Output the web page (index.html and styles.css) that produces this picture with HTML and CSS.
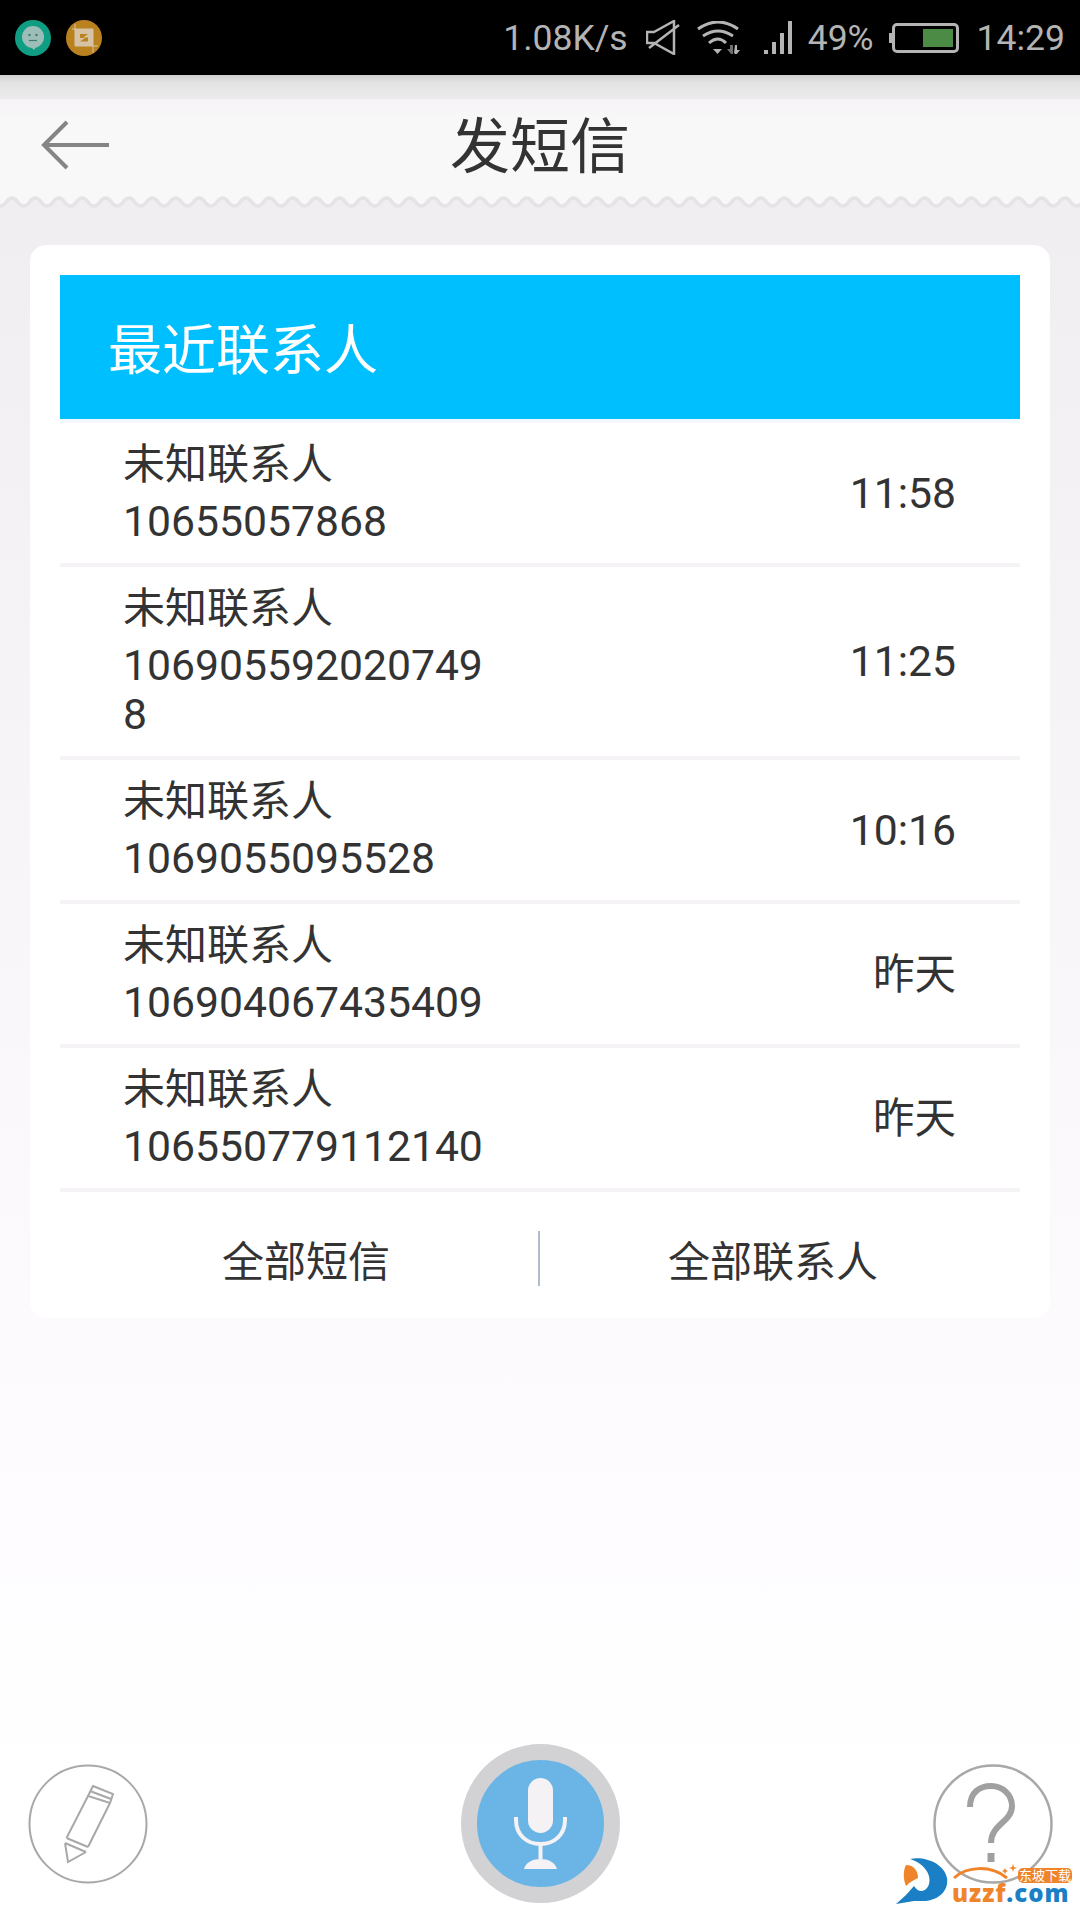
FILE: index.html
```html
<!DOCTYPE html>
<html lang="zh-CN">
<head>
    <meta charset="UTF-8">
    <meta name="viewport" content="width=device-width, initial-scale=1.0">
    <title>发短信</title>
    <link rel="stylesheet" href="styles.css">
</head>
<body>
    <div class="status-bar">
        <div class="notify-icons">
            <svg class="notify-icon" viewBox="0 0 36 36">
                <circle cx="18" cy="18" r="18" fill="#0f9e83"/>
                <circle cx="18" cy="17" r="11" fill="#9dbdb8"/>
                <path d="M15 26l4 4 3-5z" fill="#9dbdb8"/>
                <circle cx="14.500" cy="15" r="1.200" fill="#3f7a70"/>
                <circle cx="21.500" cy="15" r="1.200" fill="#3f7a70"/>
                <path d="M14 20.500h8" stroke="#3f7a70" stroke-width="1.200"/>
            </svg>
            <svg class="notify-icon" viewBox="0 0 36 36">
                <circle cx="18" cy="18" r="18" fill="#b9821f"/>
                <rect x="9" y="9" width="18" height="17" fill="#d6c3a5"/>
                <path d="M6 9h21v24M9 4v22h23" stroke="#d6c3a5" stroke-width="1" fill="none"/>
                <path d="M14 14h8l-5 3.500h5v4h-8l5-3.500h-5z" fill="#b9821f"/>
            </svg>
        </div>
        <div class="status-right">
            <span class="speed">1.08K/s</span>
            <svg class="mute-icon" viewBox="0 0 34 35" fill="none" stroke="#b4b4b4" stroke-width="2.500">
                <path d="M8 12L28 1v33L8 23H1V12h7zM3 28L33 5"/>
            </svg>
            <svg class="wifi-icon" viewBox="0 0 44 33" fill="none" stroke="#b4b4b4" stroke-width="3">
                <path d="M1 8Q21-6 41 8M6 15Q21 5 36 15M12 22Q21 14 29 22"/>
                <path d="M16 28h9l-4.500 5z" fill="#b4b4b4" stroke="none"/>
                <path d="M36 24v9h-2l-4-5h3v-4z" fill="#6e6e6e" stroke="none"/>
                <path d="M38 24h2v5h3l-4 5-2-2z" fill="#b4b4b4" stroke="none"/>
            </svg>
            <svg class="signal-icon" viewBox="0 0 28 33" fill="#b4b4b4">
                <rect x="0" y="29" width="4" height="4"/>
                <rect x="8" y="21" width="4" height="12"/>
                <rect x="16" y="12" width="4" height="21"/>
                <rect x="24" y="0" width="4" height="33"/>
            </svg>
            <span class="battery-text">49%</span>
            <div class="battery">
                <div class="battery-level"></div>
            </div>
            <span class="clock">14:29</span>
        </div>
    </div>

    <div class="title-bar">
        <svg class="back-icon" viewBox="0 0 68 50" fill="none" stroke="#858585" stroke-width="4">
            <path d="M26 2L3 25l23 23M3 25h65"/>
        </svg>
        <div class="title">发短信</div>
        <svg class="wave-edge" width="1080" height="14">
            <defs>
                <pattern id="scallop" x="0.300" width="23.400" height="14" patternUnits="userSpaceOnUse">
                    <path d="M0 11C6 11 6 3 11.700 3S17.400 11 23.400 11V0H0z" fill="#f8f8f8"/>
                    <path d="M0 11C6 11 6 3 11.700 3S17.400 11 23.400 11" fill="none" stroke="#e5e3e5" stroke-width="3.500"/>
                </pattern>
            </defs>
            <rect width="1080" height="14" fill="url(#scallop)"/>
        </svg>
    </div>

    <div class="card">
        <div class="card-header">最近联系人</div>
        <div class="contact-list">
            <div class="contact">
                <div class="contact-info">
                    <div class="contact-name">未知联系人</div>
                    <div class="contact-number">10655057868</div>
                </div>
                <div class="contact-time">11:58</div>
            </div>
            <div class="contact">
                <div class="contact-info">
                    <div class="contact-name">未知联系人</div>
                    <div class="contact-number">1069055920207498</div>
                </div>
                <div class="contact-time">11:25</div>
            </div>
            <div class="contact">
                <div class="contact-info">
                    <div class="contact-name">未知联系人</div>
                    <div class="contact-number">1069055095528</div>
                </div>
                <div class="contact-time">10:16</div>
            </div>
            <div class="contact">
                <div class="contact-info">
                    <div class="contact-name">未知联系人</div>
                    <div class="contact-number">106904067435409</div>
                </div>
                <div class="contact-time contact-day">昨天</div>
            </div>
            <div class="contact">
                <div class="contact-info">
                    <div class="contact-name">未知联系人</div>
                    <div class="contact-number">106550779112140</div>
                </div>
                <div class="contact-time contact-day">昨天</div>
            </div>
        </div>
        <div class="card-actions">
            <div class="action action-left">全部短信</div>
            <div class="action action-right">全部联系人</div>
        </div>
    </div>

    <div class="bottom-bar">
        <svg class="round-btn" viewBox="0 0 120 120" fill="none" stroke="#a8a8a8" stroke-width="2">
            <circle cx="60" cy="60" r="58.500"/>
            <path d="M65 22l20 8-3 9-22-7zM62 27l21 8M60 32L38.500 74M82 39L60 83M38.500 74L60 83M37 79l21 9M37 79l3 19 18-10"/>
        </svg>
        <div class="mic-btn">
            <svg class="mic-icon" viewBox="0 0 53 91">
                <rect x="14" y="0" width="25" height="55" rx="12.500" fill="#f5f2f6"/>
                <path d="M2 39v3c0 15 11 24 24.500 24S51 57 51 42v-3" fill="none" stroke="#f5f2f6" stroke-width="4"/>
                <path d="M24.500 66h4v15h-4zM10 91c2-7 9-10 16.500-10S41 84 43 91z" fill="#f5f2f6"/>
            </svg>
        </div>
        <svg class="round-btn" viewBox="0 0 120 120" fill="none" stroke="#a8a8a8">
            <circle cx="60" cy="60" r="58.500" stroke-width="2.500"/>
            <path d="M37 43C37 28 47 22 58 22C70 22 79 31 79 42C79 58 58 60 58 79" stroke="#a0a0a0" stroke-width="6"/>
            <path d="M58 89v9" stroke="#a0a0a0" stroke-width="7"/>
        </svg>
    </div>

    <div class="watermark">
        <svg class="watermark-logo" viewBox="0 0 52 46">
            <path d="M14 1C30-2 48 6 51 20c2 14-10 23-24 23H18L0 46l10-9 8-9c2 3 4 5 8 5 8-2 10-13 4-21C26 6 20 3 14 1z" fill="#1a7fc4"/>
            <path d="M10 7c8 0 12 6 12 13-4 2-8 4-12 8-3-7-3-15 0-21z" fill="#f0842a"/>
        </svg>
        <div class="watermark-text">
            <svg class="watermark-arc" viewBox="0 0 70 22" fill="none" stroke="#f0842a" stroke-width="3">
                <path d="M1 19C14 7 38 6 54 19"/>
                <path d="M60 5l1 3 3 1-3 1-1 3-1-3-3-1 3-1zM52 9l1 2 2 1-2 1-1 2-1-2-2-1 2-1z" fill="#f0842a" stroke="none"/>
            </svg>
            <span class="watermark-badge">东坡下载</span>
            <span class="watermark-name"><b>uzzf</b><i>.com</i></span>
        </div>
    </div>
</body>
</html>
```

FILE: styles.css
```css
* {
    margin: 0;
    padding: 0;
    box-sizing: border-box;
}

body {
    position: relative;
    width: 1080px;
    height: 1920px;
    overflow: hidden;
    display: flex;
    flex-direction: column;
    font-family: Roboto, "Noto Sans CJK SC", sans-serif;
    color: #333;
    background: linear-gradient(#f0eef0 210px, #f6f3f6 640px, #fdfafe 1300px, #fff 1800px);
}

.status-bar {
    height: 75px;
    flex-shrink: 0;
    background: #000;
    display: flex;
    align-items: center;
    justify-content: space-between;
    padding: 0 15px;
    color: #b4b4b4;
    font-size: 35.500px;
}

.notify-icons {
    display: flex;
    gap: 15px;
}

.notify-icon {
    width: 36px;
    height: 36px;
}

.status-right {
    display: flex;
    align-items: center;
}

.mute-icon {
    width: 34px;
    height: 35px;
    margin-left: 18px;
}

.wifi-icon {
    width: 44px;
    height: 33px;
    margin-left: 17px;
}

.signal-icon {
    width: 28px;
    height: 33px;
    margin-left: 23px;
}

.battery-text {
    margin-left: 16px;
}

.battery {
    position: relative;
    width: 67px;
    height: 30px;
    margin-left: 18px;
    border: 3px solid #b4b4b4;
    border-radius: 5px;
    display: flex;
    justify-content: flex-end;
    padding: 3px;
}

.battery::before {
    content: "";
    position: absolute;
    left: -6px;
    top: 7px;
    width: 3px;
    height: 10px;
    background: #b4b4b4;
}

.battery-level {
    width: 30px;
    background: #4b8b45;
}

.clock {
    margin-left: 18px;
}

.title-bar {
    position: relative;
    height: 133px;
    flex-shrink: 0;
    display: flex;
    align-items: center;
    justify-content: center;
    background: linear-gradient(#cfcfcf, #e4e4e4 8px, #ebebeb 24px, #f7f4f7 24px, #f8f8f8 45px, #f8f8f8 121px, transparent 121px);
}

.back-icon {
    position: absolute;
    left: 41px;
    top: 45px;
    width: 68px;
    height: 50px;
}

.title {
    font-size: 60px;
}

.wave-edge {
    position: absolute;
    left: 0;
    bottom: -1px;
}

.card {
    width: 1020px;
    flex-shrink: 0;
    margin: 37px 30px 0;
    padding: 30px 30px 0;
    background: #fff;
    border-radius: 16px;
    font-size: 42px;
}

.card-header {
    height: 144px;
    display: flex;
    align-items: center;
    padding: 0 0 2px 48px;
    background: #00bfff;
    color: #fff;
    font-size: 54px;
}

.contact-list {
    border-top: 4px solid #f2f8fb;
}

.contact {
    display: flex;
    justify-content: space-between;
    align-items: center;
    padding: 18px 64px 17px 63px;
    border-bottom: 4px solid #f5f3f6;
}

.contact-info {
    width: 372px;
    word-break: break-all;
}

.contact-name {
    line-height: 48px;
    margin-bottom: 8px;
}

.contact-number {
    font-size: 42.700px;
    line-height: 49px;
}

.contact-time {
    font-size: 42.700px;
    padding-bottom: 2px;
}

.contact-day {
    font-size: 41.500px;
    padding-bottom: 8px;
}

.card-actions {
    display: flex;
    align-items: center;
    height: 126px;
    padding-top: 7px;
}

.action {
    flex: 0 0 480px;
    height: 55px;
    padding-top: 7px;
    line-height: 49px;
    text-align: center;
}

.action-left {
    padding-left: 14px;
    border-right: 2px solid #b0bccc;
}

.action-right {
    padding-right: 14px;
}

.bottom-bar {
    flex: 1;
    display: flex;
    justify-content: space-between;
    align-items: flex-end;
    padding: 0 27px 36px 28px;
}

.round-btn {
    width: 120px;
    height: 120px;
}

.mic-btn {
    width: 159px;
    height: 159px;
    margin-bottom: -19px;
    border-radius: 50%;
    background: #6bb5e6;
    border: 16px solid #d2d2d5;
    display: flex;
    align-items: center;
    justify-content: center;
}

.mic-icon {
    width: 53px;
    height: 91px;
}

/* download site stamp over the help button */
.watermark {
    position: absolute;
    left: 896px;
    top: 1858px;
    display: flex;
    align-items: flex-start;
}

.watermark-logo {
    width: 52px;
    height: 46px;
}

.watermark-text {
    position: relative;
    width: 126px;
    height: 46px;
}

.watermark-arc {
    position: absolute;
    left: 5px;
    top: 1px;
    width: 70px;
    height: 22px;
}

.watermark-badge {
    position: absolute;
    right: 2px;
    top: 10px;
    width: 54px;
    font-size: 13px;
    line-height: 15px;
    text-align: center;
    border-radius: 5px;
    background: #f0842a;
    color: #fff;
}

.watermark-name {
    position: absolute;
    left: 4px;
    top: 25px;
    font-family: "Open Sans", sans-serif;
    font-size: 24px;
    line-height: 20px;
    font-weight: 800;
    letter-spacing: 1px;
}

.watermark-name b {
    color: #f0842a;
}

.watermark-name i {
    font-style: normal;
    color: #1a7fc4;
}
```
